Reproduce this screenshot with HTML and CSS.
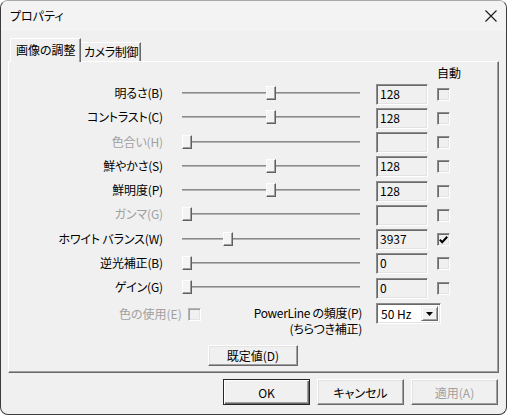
FILE: index.html
```html
<!DOCTYPE html>
<html lang="ja">
<head>
<meta charset="utf-8">
<title>プロパティ</title>
<link rel="stylesheet" href="styles.css">
</head>
<body>
<div class="window">
  <div class="titlebar">
    <span class="title">プロパティ</span>
    <svg class="close" width="12" height="12" viewBox="0 0 12 12"><path d="M0.5 0.5 L11.5 11.5 M11.5 0.5 L0.5 11.5" stroke="#1a1a1a" stroke-width="1.1" fill="none"/></svg>
  </div>
  <div class="content">
    <div class="tabs">
      <div class="tab active">画像の調整</div>
      <div class="tab">カメラ制御</div>
    </div>
    <div class="panel">
      <div class="head">自動</div>

      <div class="row">
        <div class="label">明るさ(B)</div>
        <div class="slider"><div class="track"></div><div class="thumb" style="left:84px"></div></div>
        <div class="tb">128</div>
        <div class="cb"></div>
      </div>
      <div class="row">
        <div class="label">コントラスト(C)</div>
        <div class="slider"><div class="track"></div><div class="thumb" style="left:84px"></div></div>
        <div class="tb">128</div>
        <div class="cb"></div>
      </div>
      <div class="row">
        <div class="label disabled">色合い(H)</div>
        <div class="slider"><div class="track"></div><div class="thumb" style="left:0px"></div></div>
        <div class="tb"></div>
        <div class="cb"></div>
      </div>
      <div class="row">
        <div class="label">鮮やかさ(S)</div>
        <div class="slider"><div class="track"></div><div class="thumb" style="left:84px"></div></div>
        <div class="tb">128</div>
        <div class="cb"></div>
      </div>
      <div class="row">
        <div class="label">鮮明度(P)</div>
        <div class="slider"><div class="track"></div><div class="thumb" style="left:84px"></div></div>
        <div class="tb">128</div>
        <div class="cb"></div>
      </div>
      <div class="row">
        <div class="label disabled">ガンマ(G)</div>
        <div class="slider"><div class="track"></div><div class="thumb" style="left:0px"></div></div>
        <div class="tb"></div>
        <div class="cb"></div>
      </div>
      <div class="row">
        <div class="label">ホワイト バランス(W)</div>
        <div class="slider"><div class="track"></div><div class="thumb" style="left:41px"></div></div>
        <div class="tb">3937</div>
        <div class="cb checked"><svg width="9" height="8" viewBox="0 0 9 8"><path d="M0.8 3.6 L3.2 6.2 L8.2 0.8" stroke="#000" stroke-width="2" fill="none"/></svg></div>
      </div>
      <div class="row">
        <div class="label">逆光補正(B)</div>
        <div class="slider"><div class="track"></div><div class="thumb" style="left:0px"></div></div>
        <div class="tb">0</div>
        <div class="cb"></div>
      </div>
      <div class="row">
        <div class="label">ゲイン(G)</div>
        <div class="slider"><div class="track"></div><div class="thumb" style="left:0px"></div></div>
        <div class="tb">0</div>
        <div class="cb"></div>
      </div>

      <div class="extra">
        <div class="extra-left">
          <div class="usecolor"><span class="disabled">色の使用(E)</span><span class="cb cb-disabled"></span></div>
          <div class="pl">PowerLine の頻度(P)<br>(ちらつき補正)</div>
        </div>
        <div class="combo">
          <span class="combo-text">50 Hz</span>
          <span class="combo-btn"><svg width="7" height="4" viewBox="0 0 7 4"><path d="M0 0 H7 L3.5 4 Z" fill="#000"/></svg></span>
        </div>
      </div>

      <div class="defrow">
        <button class="btn btn-def">既定値(D)</button>
      </div>
    </div>

    <div class="buttons">
      <button class="btn btn-main default">OK</button>
      <button class="btn btn-main">キャンセル</button>
      <button class="btn btn-main disabled">適用(A)</button>
    </div>
  </div>
</div>
</body>
</html>
```
FILE: styles.css
```css
* { box-sizing: border-box; }
html, body { margin: 0; padding: 0; background: #ffffff; }
body {
  font-family: "Noto Sans CJK JP", "Noto Sans", sans-serif;
  font-size: 12px;
  color: #000;
  font-feature-settings: "palt";
}
.window {
  width: 507px;
  height: 415px;
  border: 1px solid #3c3c3c;
  border-top-color: #a8a8a8;
  border-radius: 8px;
  background: #f0f0f0;
  overflow: hidden;
}
.titlebar {
  height: 30px;
  background: #f3f3f3;
  display: flex;
  align-items: center;
  justify-content: space-between;
  padding: 0 9px 0 9px;
}
.title { line-height: 16px; }
.close { display: block; }

.content { padding: 7px 7px 0 7px; }

.tabs {
  display: flex;
  align-items: flex-end;
  height: 24px;
  margin-bottom: -1px;
  padding-left: 2px;
  position: relative;
  z-index: 1;
}
.tab {
  height: 19px;
  margin-bottom: 1px;
  width: 60px;
  padding-left: 3px;
  line-height: 17px;
  background: #f0f0f0;
  border-top: 1px solid #fff;
  border-right: 1px solid #696969;
  box-shadow: inset -1px 0 0 #a0a0a0;
  white-space: nowrap;
  letter-spacing: -0.4px;
}
.tab.active {
  height: 24px;
  margin-bottom: 0;
  width: 71px;
  padding-left: 5px;
  line-height: 22px;
  border-left: 1px solid #fff;
  letter-spacing: 0;
}

.panel {
  height: 312px;
  border: 1px solid;
  border-color: #fff #696969 #696969 #fff;
  box-shadow: inset -1px -1px 0 #a0a0a0;
}
.head {
  height: 19px;
  line-height: 19px;
  padding-left: 428px;
  padding-top: 1px;
}
.row {
  display: grid;
  grid-template-columns: 169px 198px 61px 13px;
  height: 24.25px;
  align-items: center;
}
.label {
  text-align: right;
  padding-right: 15px;
  line-height: 16px;
  white-space: nowrap;
  letter-spacing: -0.15px;
}
.disabled { color: #a0a0a0; }

.slider {
  position: relative;
  width: 178px;
  height: 16px;
  margin-left: 4px;
}
.track {
  margin-top: 7px;
  height: 2px;
  border-top: 1px solid #8a8a8a;
  border-bottom: 1px solid #b4b4b4;
}
.thumb {
  position: absolute;
  top: 1px;
  width: 10px;
  height: 14px;
  background: #f4f4f4;
  border: 1px solid;
  border-color: #fff #5f5f5f #5f5f5f #fff;
  box-shadow: inset -1px -1px 0 #a0a0a0;
}

.tb {
  width: 52px;
  height: 21px;
  margin-top: 2px;
  padding-left: 3px;
  line-height: 18px;
  border: 1px solid;
  border-color: #8c8c8c #fff #fff #8c8c8c;
  box-shadow: inset 1px 1px 0 #696969, inset -1px -1px 0 #e3e3e3;
  background: #f0f0f0;
}
.cb {
  width: 13px;
  height: 13px;
  margin-top: 2px;
  border: 1px solid;
  border-color: #8c8c8c #fff #fff #8c8c8c;
  box-shadow: inset 1px 1px 0 #696969, inset -1px -1px 0 #e3e3e3;
  background: #f0f0f0;
  display: flex;
  align-items: center;
  justify-content: center;
}
.cb-disabled {
  margin-top: 0;
  border-color: #b4b4b4 #fff #fff #b4b4b4;
  box-shadow: inset 1px 1px 0 #a0a0a0, inset -1px -1px 0 #e3e3e3;
}

.extra {
  display: grid;
  grid-template-columns: 367px 74px;
  height: 33px;
  margin-top: 4px;
}
.extra-left {
  display: flex;
  justify-content: space-between;
  align-items: flex-start;
}
.usecolor {
  display: flex;
  align-items: center;
  gap: 6px;
  padding-left: 110px;
  margin-top: 4px;
  line-height: 14px;
}
.pl {
  text-align: right;
  padding-right: 14px;
  line-height: 15.5px;
  margin-top: 2px;
  white-space: nowrap;
  letter-spacing: -0.3px;
}
.combo {
  width: 65px;
  height: 21px;
  display: flex;
  align-items: stretch;
  border: 1px solid;
  border-color: #8c8c8c #fff #fff #8c8c8c;
  box-shadow: inset 1px 1px 0 #696969, inset -1px -1px 0 #e3e3e3;
  background: #fff;
  padding: 2px 2px 2px 2px;
}
.combo-text {
  flex: 1;
  padding-left: 2px;
  line-height: 15px;
}
.combo-btn {
  width: 17px;
  display: flex;
  align-items: center;
  justify-content: center;
  background: #f0f0f0;
  border: 1px solid;
  border-color: #f0f0f0 #696969 #696969 #f0f0f0;
  box-shadow: inset 1px 1px 0 #fff, inset -1px -1px 0 #a0a0a0;
}
.combo-btn svg { display: block; }

.defrow {
  margin-top: 9px;
  padding-left: 199px;
}
.btn {
  font-family: inherit;
  font-size: 12px;
  font-feature-settings: "palt";
  color: #000;
  padding: 0;
  margin: 0;
  background: #f0f0f0;
  border: 1px solid;
  border-color: #fff #696969 #696969 #fff;
  box-shadow: inset -1px -1px 0 #a0a0a0, inset 1px 1px 0 #e3e3e3;
  display: flex;
  align-items: center;
  justify-content: center;
}
.btn.disabled { color: #a0a0a0; }
.btn-def { width: 90px; height: 21px; }

.buttons {
  display: flex;
  justify-content: flex-end;
  gap: 7px;
  margin-top: 6px;
  padding-right: 1px;
}
.btn-main { width: 87px; height: 26px; }
.btn-main.default {
  border-color: #262626;
  box-shadow: inset 1px 1px 0 #fff, inset -1px -1px 0 #696969, inset -2px -2px 0 #a0a0a0;
}
```
